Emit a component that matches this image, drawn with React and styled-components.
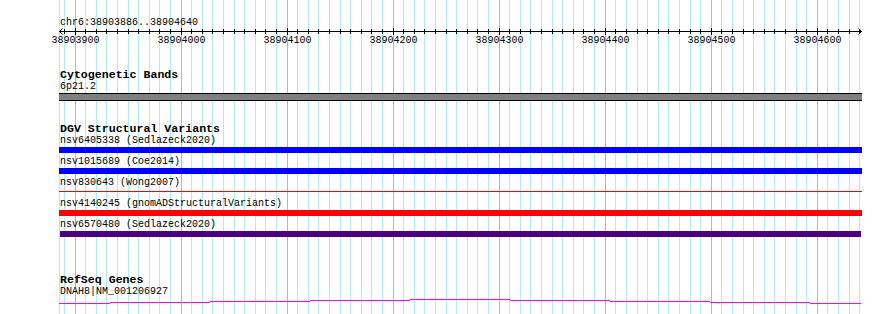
import React from 'react';
import styled, { createGlobalStyle } from 'styled-components';

const GlobalStyle = createGlobalStyle`
    html, body{
        margin: 0;
        padding: 0;
        background: #ffffff;
    }
    body{
        font-family: "Liberation Mono", "DejaVu Sans Mono", monospace;
        color: #000000;
    }
`;

const MONO = `"Liberation Mono", "DejaVu Sans Mono", monospace`;
const START = 38903886;
const END = 38904640;
const PX_PER_BP = 1.0604;
const toX = (bp) => Math.floor(75 + (bp - 38903900) * PX_PER_BP);

const ticks = [];
for (let bp = 38903890; bp <= END; bp += 10) {
    ticks.push({ bp, x: toX(bp), major: bp % 100 === 0 });
}

const Frame = styled.div`
    position: relative;
    width: 890px;
    height: 314px;
    overflow: hidden;
    background: #ffffff;
`;

const GridLayer = styled.svg`
    position: absolute;
    left: 0;
    top: 0;
    z-index: 0;
`;

const Content = styled.div`
    position: relative;
    z-index: 1;
    width: 803px;
    padding-left: 59px;
    display: flex;
    flex-direction: column;
`;

const Ruler = styled.svg`
    display: block;
    margin-left: -59px;
    text{
        font-family: ${MONO};
        font-size: 10px;
        fill: #000000;
    }
`;

const Track = styled.section`
    display: flex;
    flex-direction: column;
    margin-top: ${(p) => p.$gap}px;
`;

const TrackTitle = styled.div`
    height: 12px;
    line-height: 12px;
    font-size: 11.6px;
    font-weight: bold;
    padding-left: 1px;
    white-space: nowrap;
`;

const Rows = styled.div`
    display: flex;
    flex-direction: column;
    gap: 4px;
    margin-top: 1px;
`;

const FeatureRow = styled.div`
    display: flex;
    flex-direction: column;
`;

const FeatureLabel = styled.div`
    height: 10px;
    line-height: 10px;
    font-size: 10px;
    padding-left: 1px;
    white-space: nowrap;
`;

const Bar = styled.div`
    margin-top: 1px;
    height: 6px;
    background: ${(p) => p.$color};
    margin-left: ${(p) => p.$inset || 0}px;
    margin-right: ${(p) => p.$inset || 0}px;
`;

const ThinBar = styled.div`
    margin-top: 3px;
    margin-bottom: 3px;
    height: 1px;
    background: ${(p) => p.$color};
`;

const BandBar = styled.div`
    margin-top: 1px;
    height: 6px;
    background: #808080;
    border-top: 1px solid #000000;
    border-bottom: 1px solid #000000;
`;

const GeneLine = styled.svg`
    display: block;
    margin-top: 1px;
`;

const variants = [
    { name: 'nsv6405338 (Sedlazeck2020)', color: '#0000ff' },
    { name: 'nsv1015689 (Coe2014)', color: '#0000ff' },
    { name: 'nsv830643 (Wong2007)', color: '#ff0000', thin: true },
    { name: 'nsv4140245 (gnomADStructuralVariants)', color: '#ff0000' },
    { name: 'nsv6570480 (Sedlazeck2020)', color: '#4b0082', inset: 1 },
];

// stepped intron line, [x0, x1, y] in page pixels
const geneSteps = [
    [59, 110, 303], [110, 210, 302], [210, 310, 301], [310, 410, 300],
    [410, 510, 299], [510, 610, 300], [610, 710, 301], [710, 810, 302],
    [810, 861, 303],
];

function Grid() {
    return (
        <GridLayer width="890" height="314" shapeRendering="crispEdges">
            <rect x="59" y="0" width="1" height="314" fill="#afeeee" />
            {ticks.map((t) => (
                <rect key={t.bp} x={t.x} y="0" width="1" height="314" fill={t.major ? '#87c4e6' : '#afeeee'} />
            ))}
        </GridLayer>
    );
}

function Scale() {
    return (
        <Ruler width="890" height="60" shapeRendering="crispEdges">
            <text x="60" y="25">chr6:{START}..{END}</text>
            <rect x="59" y="31" width="803" height="1" fill="#000" />
            <path d="M59.5 31.5 L62.5 28.5 M59.5 31.5 L62.5 34.5 M861.5 31.5 L858.5 28.5 M861.5 31.5 L858.5 34.5" stroke="#000" strokeWidth="1" fill="none" shapeRendering="auto" />
            {ticks.map((t) => (
                <rect key={t.bp} x={t.x} y={t.major ? 28 : 29} width="1" height={t.major ? 7 : 5} fill="#000" />
            ))}
            {ticks.filter((t) => t.major).map((t) => (
                <text key={t.bp} x={t.x + 0.5} y="43" textAnchor="middle">{t.bp}</text>
            ))}
        </Ruler>
    );
}

export default function App() {
    return (
        <Frame>
            <GlobalStyle />
            <Grid />
            <Content>
                <Scale />
                <Track $gap={9}>
                    <TrackTitle>Cytogenetic Bands</TrackTitle>
                    <Rows>
                        <FeatureRow>
                            <FeatureLabel>6p21.2</FeatureLabel>
                            <BandBar />
                        </FeatureRow>
                    </Rows>
                </Track>
                <Track $gap={22}>
                    <TrackTitle>DGV Structural Variants</TrackTitle>
                    <Rows>
                        {variants.map((v) => (
                            <FeatureRow key={v.name}>
                                <FeatureLabel>{v.name}</FeatureLabel>
                                {v.thin
                                    ? <ThinBar $color={v.color} />
                                    : <Bar $color={v.color} $inset={v.inset} />}
                            </FeatureRow>
                        ))}
                    </Rows>
                </Track>
                <Track $gap={37}>
                    <TrackTitle>RefSeq Genes</TrackTitle>
                    <Rows>
                        <FeatureRow>
                            <FeatureLabel>DNAH8|NM_001206927</FeatureLabel>
                            <GeneLine width="803" height="8" shapeRendering="crispEdges">
                                {geneSteps.map(([x0, x1, y]) => (
                                    <rect key={x0} x={x0 - 59} y={y - 298} width={x1 - x0} height="1" fill="#ff00ff" />
                                ))}
                            </GeneLine>
                        </FeatureRow>
                    </Rows>
                </Track>
            </Content>
        </Frame>
    );
}
